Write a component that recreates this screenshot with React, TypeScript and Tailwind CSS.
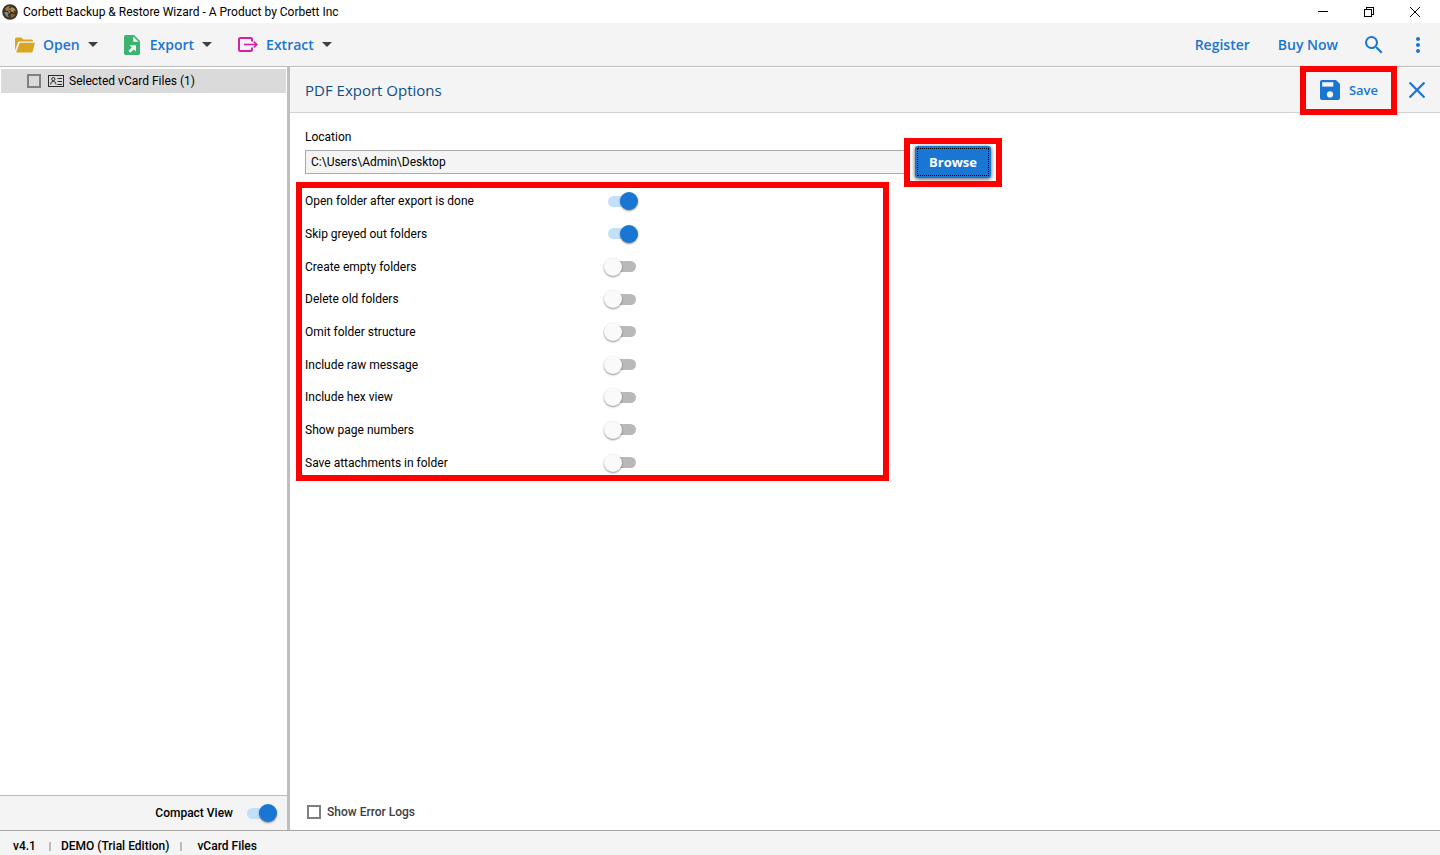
import React, { useState } from 'react';
import { MdSearch, MdMoreVert } from 'react-icons/md';

interface Option {
  id: string;
  label: string;
  enabled: boolean;
}

const initialOptions: Option[] = [
  { id: 'open-folder', label: 'Open folder after export is done', enabled: true },
  { id: 'skip-greyed', label: 'Skip greyed out folders', enabled: true },
  { id: 'create-empty', label: 'Create empty folders', enabled: false },
  { id: 'delete-old', label: 'Delete old folders', enabled: false },
  { id: 'omit-structure', label: 'Omit folder structure', enabled: false },
  { id: 'raw-message', label: 'Include raw message', enabled: false },
  { id: 'hex-view', label: 'Include hex view', enabled: false },
  { id: 'page-numbers', label: 'Show page numbers', enabled: false },
  { id: 'save-attachments', label: 'Save attachments in folder', enabled: false },
];

const AppLogo = () => (
  <svg className="w-4 h-4" viewBox="0 0 16 16" aria-hidden="true">
    <circle cx="8" cy="8" r="7.8" fill="#3a332a" />
    <path d="M3 4.5 5.5 2.5 8.5 2 6.5 4.2 9 4 7 6.5 4 7z" fill="#9a7a3c" />
    <path d="M9.5 3 12.5 4.5 14 7.5 11.5 6.5 12 9 9.5 7.5 8 6z" fill="#b08f52" />
    <path d="M2 8.5 4.5 8 7 9 5.5 11 7.5 13.5 4.5 12.5z" fill="#8d8a80" />
    <path d="M8.5 9.5 11 10.5 13.5 9.5 12 12.5 9 14z" fill="#8a6a2c" />
    <path d="M6 6.5 8.5 7.8 7.5 9z" fill="#d0bd8e" />
  </svg>
);

const FolderIcon = () => (
  <svg className="w-5 h-4" viewBox="0 0 20 16" fill="#daa520" aria-hidden="true">
    <path d="M0 13.5V2Q0 .5 1.5 .5H6.3L8.3 2.5H16.5Q18 2.5 18 4V4.6H4.6Q3.2 4.6 2.7 6z" />
    <path d="M4.8 5.8H20L17.8 14Q17.4 15.5 16 15.5H1.2z" />
  </svg>
);

const ExportIcon = () => (
  <svg className="w-4 h-5" viewBox="0 0 16 20" aria-hidden="true">
    <path d="M1.8 0H10L16 6V18.2Q16 20 14.2 20H1.8Q0 20 0 18.2V1.8Q0 0 1.8 0z" fill="#3cb371" />
    <path d="M9.2 1.5V6.8H14.5z" fill="#f4f4f4" />
    <path d="M5.6 10.2H12V16.6L9.8 14.4 6.4 17.8 4.4 15.8 7.8 12.4z" fill="#f4f4f4" />
  </svg>
);

const ExtractIcon = () => (
  <svg className="w-5 h-4" viewBox="0 0 20 16" fill="none" stroke="#d61fa8" strokeWidth="2" aria-hidden="true">
    <path d="M14 4.5V2.2Q14 1 12.8 1H2.2Q1 1 1 2.2V12.8Q1 14 2.2 14H12.8Q14 14 14 12.8V10.5" />
    <path d="M6 7.5H18.5" strokeWidth="1.6" />
    <path d="M15.8 4.6 18.8 7.5 15.8 10.4" strokeWidth="1.6" />
  </svg>
);

const SaveIcon = () => (
  <svg className="w-5 h-5" viewBox="0 0 20 20" aria-hidden="true">
    <path d="M2 0H16L20 4V18Q20 20 18 20H2Q0 20 0 18V2Q0 0 2 0z" fill="#1976d2" />
    <path d="M2.2 2.2H13.3V6.6H2.2z" fill="#f4f4f4" />
    <circle cx="10" cy="14.4" r="3.1" fill="#f4f4f4" />
  </svg>
);

const ContactIcon = () => (
  <svg className="w-4 h-3" viewBox="0 0 16 12" fill="none" stroke="#2b2b2b" aria-hidden="true">
    <rect x=".5" y=".5" width="15" height="11" />
    <circle cx="5.3" cy="4.1" r="1.6" />
    <path d="M2.5 9.5Q2.8 6.3 5.3 6.3T8.1 9.5" />
    <path d="M9.5 3.5H14M9.5 6.5H14M9.5 9.5H14" />
  </svg>
);

const Caret = () => (
  <svg className="w-[10px] h-[5px]" viewBox="0 0 10 5" fill="#404040" aria-hidden="true">
    <path d="M0 0H10L5 5z" />
  </svg>
);

// red marker drawn over the control it surrounds
const Marker = ({ className }: { className: string }) => (
  <div className={`absolute border-6 border-[#ff0000] pointer-events-none ${className}`} />
);

interface SwitchProps {
  id: string;
  checked: boolean;
  onChange: () => void;
}

const Switch: React.FC<SwitchProps> = ({ id, checked, onChange }) => (
  <span className="relative flex items-center w-[34px] h-[18px]">
    <input
      id={id}
      type="checkbox"
      role="switch"
      checked={checked}
      onChange={onChange}
      className="absolute inset-0 w-full h-full opacity-0 z-10 cursor-pointer"
    />
    <span className={`w-6 h-[11px] rounded-full ${checked ? 'ml-1 bg-[#c2e0fa]' : 'ml-2 bg-[#b9b9b9]'}`} />
    <span
      className={`absolute top-0 w-[18px] h-[18px] rounded-full shadow-[0_1px_2px_rgba(0,0,0,0.45)] ${
        checked ? 'right-0 bg-[#1976d2]' : 'left-0 bg-[#fafafa]'
      }`}
    />
  </span>
);

const checkboxClass = 'appearance-none w-[14px] h-[14px] border-2 border-[#808080] checked:bg-[#1976d2]';

const App: React.FC = () => {
  const [options, setOptions] = useState<Option[]>(initialOptions);
  const [compact, setCompact] = useState(true);

  const toggle = (id: string) =>
    setOptions(options.map((o) => (o.id === id ? { ...o, enabled: !o.enabled } : o)));

  return (
    <div className="flex flex-col min-h-screen bg-white text-black text-[12px] leading-4 font-['Roboto','Open_Sans',sans-serif]">
      <header className="flex items-center justify-between h-[23px] pl-[2px] pr-5">
        <div className="flex items-center gap-[5px]">
          <AppLogo />
          <h1>Corbett Backup &amp; Restore Wizard - A Product by Corbett Inc</h1>
        </div>
        <div className="flex items-center gap-9">
          <button aria-label="Minimize">
            <svg className="w-[10px] h-[10px]" viewBox="0 0 10 10" stroke="#000" shapeRendering="crispEdges">
              <path d="M0 4.5H10" />
            </svg>
          </button>
          <button aria-label="Restore">
            <svg className="w-[10px] h-[10px]" viewBox="0 0 10 10" fill="none" stroke="#000" shapeRendering="crispEdges">
              <path d="M.5 2.5H7.5V9.5H.5zM2.5 2.5V.5H9.5V7.5H7.5" />
            </svg>
          </button>
          <button aria-label="Close">
            <svg className="w-[10px] h-[10px]" viewBox="0 0 10 10" stroke="#000">
              <path d="M0 0 10 10M10 0 0 10" />
            </svg>
          </button>
        </div>
      </header>

      <nav className="flex items-center justify-between h-11 pl-[15px] pr-[14px] bg-[#f4f4f4] border-b border-[#bcbcbc] font-['Open_Sans',sans-serif] text-[14px] leading-5 font-semibold text-[#1976d2]">
        <div className="flex items-center gap-[26px]">
          <button className="flex items-center gap-2">
            <FolderIcon />
            Open
            <Caret />
          </button>
          <button className="flex items-center gap-2">
            <ExportIcon />
            <span className="ml-[2px]">Export</span>
            <Caret />
          </button>
          <button className="flex items-center gap-2">
            <ExtractIcon />
            Extract
            <Caret />
          </button>
        </div>
        <div className="flex items-center gap-7">
          <a href="#register">Register</a>
          <a href="#buy">Buy Now</a>
          <button aria-label="Search" className="-mx-1">
            <MdSearch size={24} />
          </button>
          <button aria-label="More" className="-mx-1">
            <MdMoreVert size={24} />
          </button>
        </div>
      </nav>

      <div className="flex flex-1">
        <aside className="flex flex-col w-[290px] shrink-0 border-r-3 border-[#bebebe]">
          <div className="flex-1 pt-[2px] px-px">
            <div className="flex items-center h-6 pl-[26px] bg-[#dadada]">
              <input id="vcards" type="checkbox" className={checkboxClass} />
              <label htmlFor="vcards" className="flex items-center ml-[7px] gap-[5px]">
                <ContactIcon />
                <span>Selected vCard Files (1)</span>
              </label>
            </div>
          </div>
          <div className="flex items-center justify-end gap-[10px] h-[35px] pr-[10px] bg-[#f4f4f4] border-t border-[#bcbcbc]">
            <label htmlFor="compact" className="font-medium">Compact View</label>
            <Switch id="compact" checked={compact} onChange={() => setCompact(!compact)} />
          </div>
        </aside>

        <main className="flex flex-col flex-1">
          <div className="flex items-center justify-between h-[45px] mt-px px-[15px] bg-[#f4f4f4] border-b border-[#d2d2d2] font-['Open_Sans',sans-serif]">
            <h2 className="text-[15px] leading-5 text-[#0e4f88]">PDF Export Options</h2>
            <div className="flex items-center gap-[31px] text-[#1976d2]">
              <div className="relative">
                <button className="flex items-center gap-[9px] text-[13px] leading-5 font-semibold">
                  <SaveIcon />
                  Save
                </button>
                <Marker className="-top-[14px] -bottom-[15px] -left-5 -right-[19px]" />
              </div>
              <button aria-label="Close panel">
                <svg className="w-4 h-4" viewBox="0 0 16 16" stroke="#1976d2" strokeWidth="2.2">
                  <path d="M.5 .5 15.5 15.5M15.5 .5 .5 15.5" />
                </svg>
              </button>
            </div>
          </div>

          <div className="flex-1 px-[15px] pt-4">
            <label htmlFor="location" className="block mb-px">Location</label>
            <div className="flex items-center">
              <input
                id="location"
                defaultValue="C:\Users\Admin\Desktop"
                className="w-[600px] h-6 px-[5px] bg-[#f4f4f4] border border-[#a9aaa9]"
              />
              <div className="relative ml-[10px]">
                <button className="block w-[76px] h-8 p-[2px] rounded-[3px] bg-[#1976d2] text-white font-['Open_Sans',sans-serif] text-[13px] font-bold shadow-[0_1px_4px_rgba(0,0,0,0.7)]">
                  <span className="flex items-center justify-center h-full border border-dotted border-black">Browse</span>
                </button>
                <Marker className="-top-2 -bottom-[9px] -left-[11px] -right-[11px]" />
              </div>
            </div>

            <div className="relative mt-[7px] w-[576px]">
              <div className="grid auto-rows-fr h-[294px]">
                {options.map((option) => (
                  <div key={option.id} className="flex items-center">
                    <label htmlFor={option.id} className="w-[299px]">{option.label}</label>
                    <Switch id={option.id} checked={option.enabled} onChange={() => toggle(option.id)} />
                  </div>
                ))}
              </div>
              <Marker className="-top-[3px] -bottom-[2px] -left-[9px] -right-2" />
            </div>
          </div>

          <div className="flex items-center gap-[6px] h-9 pl-[17px] text-[#404040]">
            <input id="logs" type="checkbox" className={checkboxClass} />
            <label htmlFor="logs" className="font-medium">Show Error Logs</label>
          </div>
        </main>
      </div>

      <footer className="flex items-center h-[25px] pl-[13px] pt-[6px] bg-[#f4f4f4] border-t border-[#a6a6a6] font-medium">
        <span>v4.1</span>
        <span className="w-[2px] h-[9px] ml-[13px] mr-[10px] bg-[#bcbcbc]" />
        <span>DEMO (Trial Edition)</span>
        <span className="w-[2px] h-[9px] ml-[11px] mr-[15px] bg-[#bcbcbc]" />
        <span>vCard Files</span>
      </footer>
    </div>
  );
};

export default App;
